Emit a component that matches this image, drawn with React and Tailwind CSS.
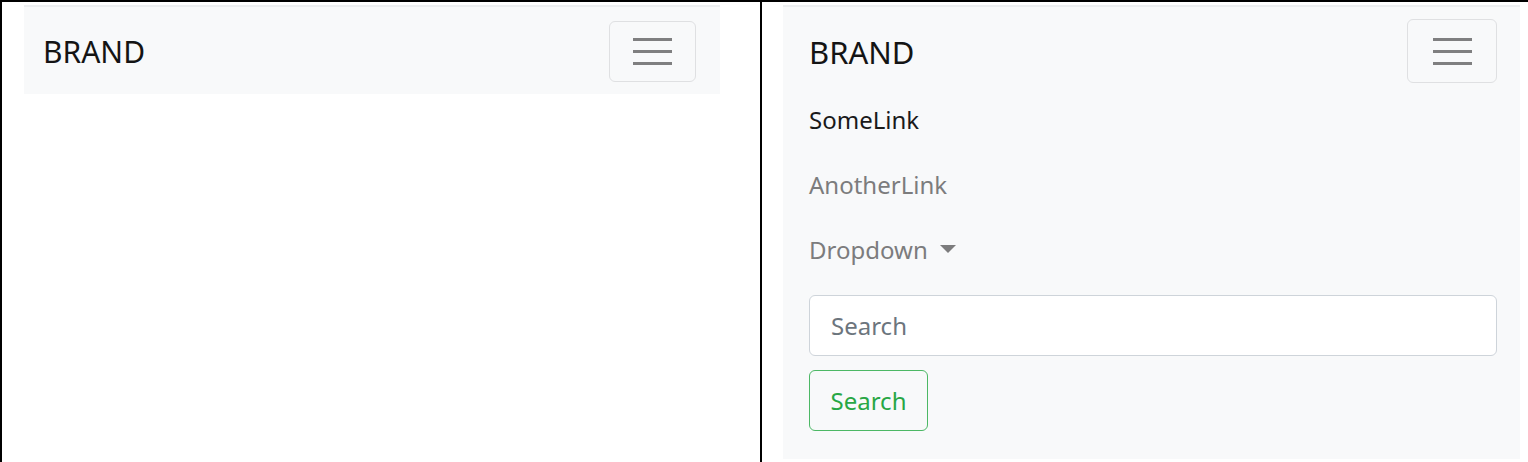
import React from "react";

function Toggler({ className }) {
  return (
    <button
      className={
        "flex flex-col items-center justify-center gap-[9px] rounded-[6px] border border-[#dfe0e2] bg-transparent " +
        className
      }
    >
      <span className="block h-[3px] w-[39px] bg-[#7f7f80]" />
      <span className="block h-[3px] w-[39px] bg-[#7f7f80]" />
      <span className="block h-[3px] w-[39px] bg-[#7f7f80]" />
    </button>
  );
}

export default function App() {
  return (
    <div
      className="flex h-[462px] w-[1528px] border-l-2 border-t-2 border-black bg-white"
      style={{ fontFamily: '"Noto Sans", "Open Sans", sans-serif' }}
    >
      {/* Left cell */}
      <div className="w-[760px] shrink-0 border-r-2 border-black pl-[22px] pt-[3px]">
        <div className="flex h-[89px] w-[696px] items-center justify-between border-t-2 border-[#eceef0] bg-[#f8f9fa] pl-[19px] pr-[24px]">
          <span className="mt-[3px] text-[30px] leading-none text-[#141414]">BRAND</span>
          <Toggler className="h-[61px] w-[87px] mt-[1px]" />
        </div>
      </div>

      {/* Right cell */}
      <div className="flex-1 pl-[21px] pt-[3px]">
        <div className="flex h-[454px] w-[737px] flex-col border-t-2 border-[#eceef0] bg-[#f8f9fa] pl-[26px] pr-[23px] pt-[12px]">
          <div className="flex h-[64px] items-center justify-between">
            <span className="mt-[3px] text-[31px] leading-none text-[#141414]">BRAND</span>
            <Toggler className="h-[64px] w-[90px]" />
          </div>
          <nav className="mt-[4px] flex flex-col">
            <a className="block h-[65px] text-[24px] leading-[65px] text-[#1a1a1a]">SomeLink</a>
            <a className="block h-[65px] text-[24px] leading-[65px] text-[#7c7c7d]">AnotherLink</a>
            <a className="flex h-[65px] items-center text-[24px] leading-[65px] text-[#7c7c7d]">
              Dropdown
              <svg className="ml-[12px] mt-[-2px]" width="16" height="8" viewBox="0 0 16 8">
                <polygon points="0,0 16,0 8,8" fill="#7c7c7d" />
              </svg>
            </a>
          </nav>
          <div className="mt-[13px] flex h-[61px] items-center rounded-[6px] border border-[#ced4da] bg-white pl-[21px]">
            <span className="text-[24px] text-[#6c757d]">Search</span>
          </div>
          <div className="mt-[14px]">
            <button className="flex h-[61px] w-[119px] items-center justify-center rounded-[6px] border border-[#4cb865] bg-transparent text-[24px] text-[#28a745]">
              Search
            </button>
          </div>
        </div>
      </div>
    </div>
  );
}
